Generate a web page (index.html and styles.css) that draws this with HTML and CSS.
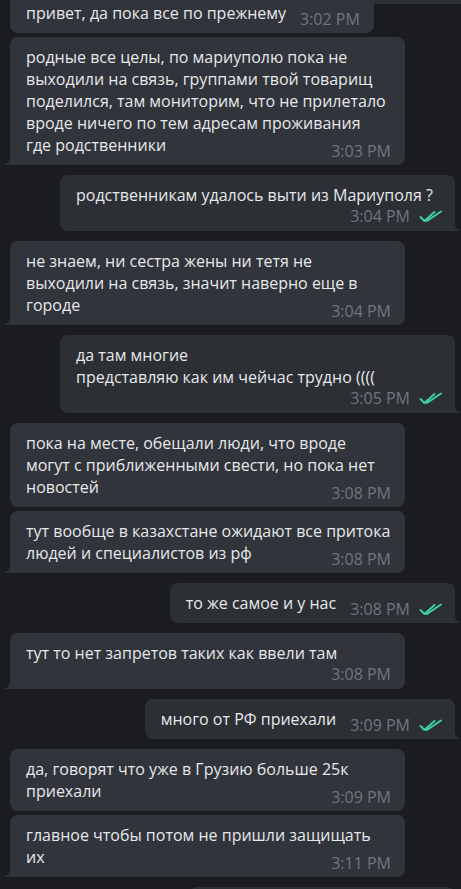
FILE: index.html
```html
<!DOCTYPE html>
<html lang="ru">

<head>
    <title>Чат</title>

    <link rel="stylesheet" href="styles.css">
</head>

<body>
    <div class="top-edge"></div>
    <main class="chat">
        <div class="msg in">
            <div class="bubble">привет, да пока все по прежнему<span class="meta"><span class="time">3:02 PM</span></span></div>
        </div>
        <div class="msg in last">
            <div class="bubble">родные все целы, по мариуполю пока не выходили на связь, группами твой товарищ поделился, там мониторим, что не прилетало вроде ничего по тем адресам проживания<br>где родственники<span class="meta"><span class="time">3:03 PM</span></span></div>
        </div>

        <div class="msg out last">
            <div class="bubble">родственникам удалось выти из Мариуполя ?<span class="meta below"><span class="time">3:04 PM</span><svg class="check" viewBox="0 0 24 14"><path d="M1.5 8 L5.5 12 L15.5 3 M8 12 L22 2.5" /></svg></span></div>
        </div>

        <div class="msg in last">
            <div class="bubble">не знаем, ни сестра жены ни тетя не выходили на связь, значит наверно еще в городе<span class="meta"><span class="time">3:04 PM</span></span></div>
        </div>

        <div class="msg out last">
            <div class="bubble">да там многие<br>представляю как им чейчас трудно ((((<span class="meta below"><span class="time">3:05 PM</span><svg class="check" viewBox="0 0 24 14"><path d="M1.5 8 L5.5 12 L15.5 3 M8 12 L22 2.5" /></svg></span></div>
        </div>

        <div class="msg in">
            <div class="bubble">пока на месте, обещали люди, что вроде могут с приближенными свести, но пока нет новостей<span class="meta"><span class="time">3:08 PM</span></span></div>
        </div>
        <div class="msg in last">
            <div class="bubble">тут вообще в казахстане ожидают все притока людей и специалистов из рф<span class="meta"><span class="time">3:08 PM</span></span></div>
        </div>

        <div class="msg out last">
            <div class="bubble">то же самое и у нас<span class="meta"><span class="time">3:08 PM</span><svg class="check" viewBox="0 0 24 14"><path d="M1.5 8 L5.5 12 L15.5 3 M8 12 L22 2.5" /></svg></span></div>
        </div>

        <div class="msg in last">
            <div class="bubble">тут то нет запретов таких как ввели там<span class="meta below"><span class="time">3:08 PM</span></span></div>
        </div>

        <div class="msg out last">
            <div class="bubble">много от РФ приехали<span class="meta"><span class="time">3:09 PM</span><svg class="check" viewBox="0 0 24 14"><path d="M1.5 8 L5.5 12 L15.5 3 M8 12 L22 2.5" /></svg></span></div>
        </div>

        <div class="msg in">
            <div class="bubble">да, говорят что уже в Грузию больше 25к приехали<span class="meta"><span class="time">3:09 PM</span></span></div>
        </div>
        <div class="msg in last">
            <div class="bubble">главное чтобы потом не пришли защищать их<span class="meta"><span class="time">3:11 PM</span></span></div>
        </div>

        <div class="msg out last">
            <div class="bubble">да, это точно так<span class="meta"><span class="time">3:12 PM</span><svg class="check" viewBox="0 0 24 14"><path d="M1.5 8 L5.5 12 L15.5 3 M8 12 L22 2.5" /></svg></span></div>
        </div>
    </main>
</body>

</html>
```

FILE: styles.css
```css
* {
    padding: 0;
    margin: 0;
    box-sizing: border-box;
}

body {
    background-color: #1b1c20;
    font-family: "Open Sans", "Noto Sans", sans-serif;
    color: #e6e8eb;
    overflow: hidden;
}

.top-edge {
    position: absolute;
    top: 0;
    right: 0;
    width: 88px;
    height: 4px;
    background-color: #2c2f34;
}

.chat {
    display: flex;
    flex-direction: column;
    margin-top: -7px;
    padding: 0 6px 0 10px;
}

.msg {
    display: flex;
    margin-bottom: 4px;
}

.msg.last {
    margin-bottom: 10px;
}

.msg.out {
    justify-content: flex-end;
}

.bubble {
    position: relative;
    display: flow-root;
    max-width: 395px;
    padding: 9px 14px 9px 16px;
    border-radius: 8px;
    background-color: #31343a;
    font-size: 16px;
    line-height: 22px;
}

.out .bubble {
    background-color: #2c2f34;
    padding-right: 12px;
}

.in.last .bubble {
    border-bottom-left-radius: 0;
}

.out.last .bubble {
    border-bottom-right-radius: 0;
}

/* хвостик пузыря */
.in.last .bubble::before,
.out.last .bubble::after {
    content: "";
    position: absolute;
    bottom: 0;
    width: 8px;
    height: 11px;
}

.in.last .bubble::before {
    left: -7px;
    background: radial-gradient(ellipse 8px 11px at 0 0, transparent 96%, #31343a 100%);
}

.out.last .bubble::after {
    right: -7px;
    background: radial-gradient(ellipse 8px 11px at 100% 0, transparent 96%, #2c2f34 100%);
}

.meta {
    float: right;
    display: flex;
    align-items: center;
    height: 20px;
    margin: 7px 0 -5px 14px;
    line-height: 20px;
}

.meta.below {
    margin: 0 0 -4px 14px;
}

.time {
    font-size: 16px;
    color: #6f7680;
}

.check {
    width: 24px;
    height: 14px;
    margin-left: 9px;
    fill: none;
    stroke: #3fcfa6;
    stroke-width: 2;
    stroke-linecap: round;
    stroke-linejoin: round;
}
```
